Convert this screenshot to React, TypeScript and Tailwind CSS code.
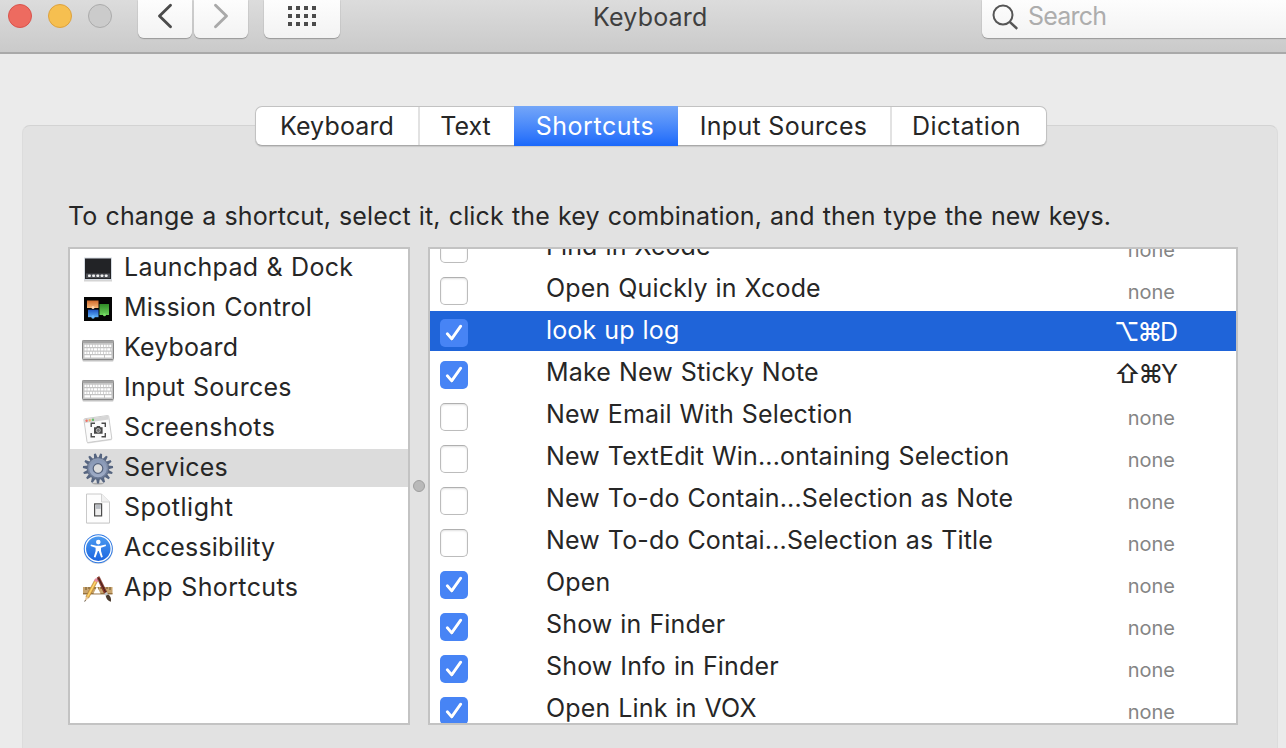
import React from "react";

function LaunchpadIcon() {
  return (
    <svg width="32" height="32" viewBox="0 0 32 32">
      <rect x="2" y="6" width="28" height="22.5" fill="#b9b9b9" opacity=".6" />
      <rect x="2" y="4.500" width="28" height="22.500" fill="#d5dbe2" />
      <rect x="3" y="5.500" width="26" height="20.500" fill="#222326" />
      <rect x="4" y="20.500" width="24" height="4.600" fill="#4c4f55" />
      {[6, 10.2, 14.4, 18.6, 22.8].map((x) => (
        <rect key={x} x={x} y="21.500" width="2.800" height="2.600" rx=".8" fill="#f0f0f0" />
      ))}
    </svg>
  );
}

function MissionIcon() {
  return (
    <svg width="32" height="32" viewBox="0 0 32 32">
      <defs>
        <linearGradient id="mo" x1="0" y1="0" x2="0" y2="1"><stop offset="0" stopColor="#d06a2c" /><stop offset="1" stopColor="#f9b878" /></linearGradient>
        <linearGradient id="mb" x1="0" y1="0" x2="0" y2="1"><stop offset="0" stopColor="#1f55c4" /><stop offset="1" stopColor="#5fb1f7" /></linearGradient>
        <linearGradient id="mg" x1="0" y1="0" x2="0" y2="1"><stop offset="0" stopColor="#2f8a26" /><stop offset="1" stopColor="#6bd05a" /></linearGradient>
      </defs>
      <rect x="2" y="4" width="28" height="24" fill="#050505" />
      <rect x="5" y="7.500" width="11.500" height="7.500" fill="url(#mo)" />
      <rect x="6" y="16.700" width="10.500" height="7.500" fill="url(#mb)" />
      <rect x="17.500" y="11" width="9.500" height="11" fill="url(#mg)" />
      <circle cx="11" cy="14.600" r="1.500" fill="#ffd5ac" />
      <circle cx="11" cy="24" r="1.700" fill="#69b8ff" />
      <circle cx="22.500" cy="21.800" r="1.500" fill="#78dd66" />
    </svg>
  );
}

function KeyboardIcon() {
  return (
    <svg width="32" height="32" viewBox="0 0 32 32">
      <rect x="0.500" y="26" width="31" height="2.500" rx="1" fill="#9b9b9b" opacity=".6" />
      <rect x="0.500" y="7.500" width="31" height="19" rx=".8" fill="#c4c4c4" stroke="#858585" />
      <rect x="0.500" y="7.500" width="31" height="2.500" fill="#a5a5a5" />
      <path d="M2.500 12.800H29.500M2.500 19.800H29.500" stroke="#fff" strokeWidth="2.300" strokeDasharray="2 .75" />
      <path d="M2.500 16.300H29.500" stroke="#fff" strokeWidth="2.300" strokeDasharray="2.200 .7 3 .7" />
      <path d="M2.500 23.300H8M9 23.300H22M23 23.300H29.500" stroke="#fff" strokeWidth="2.300" />
    </svg>
  );
}

function ScreenshotIcon() {
  return (
    <svg width="32" height="32" viewBox="0 0 32 32">
      <g transform="rotate(-8 16 17)">
        <rect x="3.500" y="5" width="25" height="24" rx="1" fill="#bcbcbc" opacity=".5" />
        <rect x="3.500" y="4" width="25" height="24" rx="1" fill="#fbfbfb" stroke="#c4c4c4" strokeWidth=".8" />
        <rect x="4" y="4.400" width="24" height="3.800" fill="#d6d6d6" />
        <circle cx="6" cy="6.200" r="1.200" fill="#f27066" /><circle cx="9.200" cy="6.200" r="1.200" fill="#edb86e" /><circle cx="12.400" cy="6.200" r="1.200" fill="#67bd68" />
      </g>
      <path d="M9.200 14v-3.800h3.800M19.500 10.200h3.800V14M23.300 20v3.800h-3.800M13 23.800H9.200V20" fill="none" stroke="#4a4a4a" strokeWidth="1.400" />
      <path d="M12 14.300h2.200l.8-1.200h2.800l.8 1.200h2v6.400H12z" fill="#474747" />
      <circle cx="16.300" cy="17.400" r="2" fill="#777" stroke="#ddd" strokeWidth=".7" />
    </svg>
  );
}

function GearIcon() {
  const teeth = Array.from({ length: 15 }, (_, i) => i * 24);
  return (
    <svg width="32" height="32" viewBox="0 0 32 32">
      <defs>
        <linearGradient id="gear" x1="0" y1="0" x2="0" y2="32" gradientUnits="userSpaceOnUse"><stop offset="0" stopColor="#98a7c0" /><stop offset="1" stopColor="#5c6a86" /></linearGradient>
        <linearGradient id="gearface" x1="0" y1="0" x2="0" y2="1"><stop offset="0" stopColor="#8797b5" /><stop offset="1" stopColor="#9facc6" /></linearGradient>
      </defs>
      <ellipse cx="16" cy="30.600" rx="6" ry=".9" fill="#aaa" />
      {teeth.map((a) => (
        <path key={a} d="M14 6 15 .4h2L18 6z" fill="#566580" transform={`rotate(${a + 12} 16 15.500)`} />
      ))}
      <circle cx="16" cy="15.500" r="10.800" fill="url(#gear)" stroke="#596680" strokeWidth=".8" />
      <circle cx="16" cy="15.500" r="8.800" fill="url(#gearface)" />
      <circle cx="16" cy="15.500" r="4.800" fill="#dcdcdc" stroke="#56637d" strokeWidth="1.200" />
    </svg>
  );
}

function SpotlightIcon() {
  return (
    <svg width="32" height="32" viewBox="0 0 32 32">
      <path d="M4.500 1.500h15l8 8v20.500h-23z" fill="#ddd" transform="translate(0 .5)" />
      <path d="M4.500 1h15l8 8v21h-23z" fill="#fdfdfd" stroke="#c4c4c4" strokeWidth=".9" />
      <path d="M19.500 1v8h8" fill="#f0f0f0" stroke="#cfcfcf" strokeWidth=".9" />
      <rect x="12.600" y="10.900" width="7" height="12" fill="#eee" stroke="#4b4b4b" strokeWidth="1.200" />
      <rect x="13.600" y="11.900" width="5" height="4" fill="#b8bcc2" />
    </svg>
  );
}

function AccessibilityIcon() {
  return (
    <svg width="32" height="32" viewBox="0 0 32 32">
      <defs><linearGradient id="acc" x1="0" y1="0" x2="0" y2="1"><stop offset="0" stopColor="#4b9bf0" /><stop offset="1" stopColor="#1a64e0" /></linearGradient></defs>
      <circle cx="16.300" cy="16.500" r="14.600" fill="#bbb" opacity=".5" />
      <circle cx="16.300" cy="15.700" r="14.500" fill="#2c78e4" />
      <circle cx="16.300" cy="15.700" r="12.900" fill="url(#acc)" stroke="#fff" strokeWidth="1.300" />
      <circle cx="16.300" cy="9.100" r="2.300" fill="#fff" />
      <path d="M8.900 11.500 14.200 12.700h4.200l5.300-1.200.3 1.600-5 1.700v3.200l1.800 6-1.700.6-2.400-6.600h-.8l-2.400 6.600-1.700-.6 1.800-6v-3.200l-5-1.700z" fill="#fff" />
    </svg>
  );
}

function AppsIcon() {
  return (
    <svg width="32" height="32" viewBox="0 0 32 32">
      <rect x="1" y="14" width="29.500" height="7" fill="#c9a56f" />
      <path d="M1 20.800h29.500" stroke="#896433" strokeWidth="1.200" />
      <path d="M4 14v3M7 14v2M10 14v3M13 14v2M16 14v3M19 14v2M22 14v3M25 14v2M28 14v3" stroke="#604720" strokeWidth=".9" />
      <path d="M18.500 20.500h-7l3.500-7z" fill="#fff" />
      <path d="M12.800 6.800 15.500 8.400 6.700 25 3.900 23.500z" fill="#f0b94d" stroke="#9a6d2b" strokeWidth=".5" />
      <path d="M13.700 8.500 5.600 23.500" stroke="#ffdb7d" strokeWidth="1" />
      <path d="M12 7.800 13.300 5.600q1.500-1.100 3 1.300L15 9.300z" fill="#e78ba2" />
      <path d="M3.900 23.500 6.700 25 2.400 29z" fill="#e7c699" />
      <path d="m2.900 27.200-.5 1.800 1.600-1.500z" fill="#222" />
      <path d="M15 4.800 17.200 3.500 24.800 19l-2.500 1.400z" fill="#a33322" stroke="#57241c" strokeWidth=".5" />
      <path d="m16.500 5 7.200 14.500" stroke="#2c2525" strokeWidth="1" />
      <path d="m22.300 20.300 2.500-1.400 1.400 2.600-2.500 1.300z" fill="#bfc4c8" />
      <path d="M23.700 22.800 26.200 21.500q3.500 2.300 2.700 7.200-4.200-.8-5.200-5.900z" fill="#4b3c30" />
    </svg>
  );
}

const categories = [
  { name: "Launchpad & Dock", icon: LaunchpadIcon, tracking: "tracking-[0.3px]" },
  { name: "Mission Control", icon: MissionIcon, tracking: "tracking-[0.2px]" },
  { name: "Keyboard", icon: KeyboardIcon, tracking: "tracking-[0.15px]" },
  { name: "Input Sources", icon: KeyboardIcon, tracking: "tracking-[0.25px]" },
  { name: "Screenshots", icon: ScreenshotIcon, tracking: "tracking-[0.35px]" },
  { name: "Services", icon: GearIcon, selected: true, tracking: "tracking-[0.15px]" },
  { name: "Spotlight", icon: SpotlightIcon, tracking: "tracking-[0.5px]" },
  { name: "Accessibility", icon: AccessibilityIcon, tracking: "tracking-[0.17px]" },
  { name: "App Shortcuts", icon: AppsIcon, tracking: "tracking-[0.38px]" },
];

const services = [
  { name: "Find in Xcode", on: false },
  { name: "Open Quickly in Xcode", on: false },
  { name: "look up log", on: true, symbols: "⌥⌘", letter: "D", selected: true },
  { name: "Make New Sticky Note", on: true, symbols: "⇧⌘", letter: "Y" },
  { name: "New Email With Selection", on: false },
  { name: "New TextEdit Win...ontaining Selection", on: false },
  { name: "New To-do Contain...Selection as Note", on: false },
  { name: "New To-do Contai...Selection as Title", on: false },
  { name: "Open", on: true },
  { name: "Show in Finder", on: true },
  { name: "Show Info in Finder", on: true },
  { name: "Open Link in VOX", on: true },
];

const tabs = [
  { name: "Keyboard", cls: "w-[164px] border-r-2 border-[#e2e2e2] tracking-[0.15px]" },
  { name: "Text", cls: "w-[94px] pr-[3px]" },
  { name: "Shortcuts", cls: "w-[164px] -my-px bg-linear-to-b from-[#74a6f8] to-[#1a68fa] pr-[2px] text-white tracking-[0.55px]" },
  { name: "Input Sources", cls: "w-[214px] border-r-2 border-[#e2e2e2] pr-px tracking-[0.3px]" },
  { name: "Dictation", cls: "flex-1 pr-[5px] tracking-[0.5px]" },
];

function Checkbox({ on }: { on: boolean }) {
  if (!on) {
    return <span className="block size-7 rounded-[5px] border border-[#bcbcbc] border-t-[#b0b0b0] bg-white shadow-[inset_0_1px_2px_rgba(0,0,0,0.12)]" />;
  }
  return (
    <span className="flex size-7 rounded-[5px] bg-[#4784f5]">
      <svg width="28" height="28" viewBox="0 0 28 28" fill="none" strokeLinecap="round" strokeLinejoin="round">
        <path d="M7.300 15.600 11.700 20.700 20.700 8" stroke="#2b62c8" strokeWidth="2.600" opacity=".45" />
        <path d="M7.300 14.800 11.700 19.900 20.700 7.200" stroke="#fff" strokeWidth="2.900" />
      </svg>
    </span>
  );
}

export default function App() {
  return (
    <div className="flex h-[748px] w-[1286px] flex-col overflow-hidden bg-[#ebebeb] font-['Inter',sans-serif] text-[25px] text-[#262626]">
      <header className="flex h-[54px] shrink-0 items-start border-b-2 border-[#a9a9a9] bg-linear-to-b from-[#dcdcdc] to-[#cacaca]">
        <div className="flex gap-4 pl-2 pt-1">
          <span className="size-6 rounded-full border border-[#d9534c] bg-[#ed6b60]" />
          <span className="size-6 rounded-full border border-[#dda23e] bg-[#f6bf50]" />
          <span className="size-6 rounded-full border border-[#ababab] bg-[#cbcbcb]" />
        </div>
        <div className="ml-[26px] flex h-[38px] gap-[2px]">
          <div className="w-[54px] rounded-b-md bg-linear-to-b from-[#fdfdfd] to-[#f3f3f3] shadow-[0_1px_1px_#999,0_0_1px_#999]">
            <svg width="54" height="38" viewBox="0 0 54 38"><path d="M32.500 5.300 21.500 16l11 10.700" fill="none" stroke="#4b4b4b" strokeWidth="2.900" strokeLinecap="round" strokeLinejoin="round" /></svg>
          </div>
          <div className="w-[54px] rounded-b-md bg-linear-to-b from-[#fdfdfd] to-[#f3f3f3] shadow-[0_1px_1px_#999,0_0_1px_#999]">
            <svg width="54" height="38" viewBox="0 0 54 38"><path d="M21.500 5.300 32.500 16l-11 10.700" fill="none" stroke="#a9a9a9" strokeWidth="2.900" strokeLinecap="round" strokeLinejoin="round" /></svg>
          </div>
        </div>
        <div className="ml-4 flex h-[38px] w-[76px] justify-center rounded-b-md bg-linear-to-b from-[#fdfdfd] to-[#f3f3f3] pt-[6px] shadow-[0_1px_1px_#999,0_0_1px_#999]">
          <div className="grid h-5 grid-cols-4 gap-1">
            {Array.from({ length: 12 }, (_, i) => <span key={i} className="size-1 bg-[#4b4b4b]" />)}
          </div>
        </div>
        <h1 className="ml-[253px] w-[389px] pt-[1px] leading-8 tracking-[0.2px] text-[#3f3f3f]">Keyboard</h1>
        <div className="flex h-[38px] flex-1 rounded-bl-md bg-linear-to-b from-[#fdfdfd] to-[#f3f3f3] pl-[10px] shadow-[0_1px_1px_#999,0_0_1px_#999]">
          <svg width="28" height="34" viewBox="0 0 28 34" fill="none" stroke="#555" strokeWidth="2"><circle cx="11" cy="15" r="9.500" /><path d="m17.700 21.800 7.500 7" strokeWidth="2.500" /></svg>
          <span className="ml-2 leading-8 tracking-[-0.8px] text-[#adadad]">Search</span>
        </div>
      </header>

      <main className="ml-[22px] mr-2 mt-[71px] flex flex-1 flex-col rounded-t-[8px] border border-b-0 border-[#d3d3d3] border-x-[#dcdcdc] bg-[#e2e2e2]">
        <nav className="-mt-[20px] ml-[232px] flex h-[40px] w-[792px] shrink-0 rounded-[7px] border border-[#c2c2c2] border-b-[#a9a9a9] bg-white shadow-[0_1px_1px_rgba(0,0,0,0.12)]">
          {tabs.map((t) => (
            <div key={t.name} className={`flex items-center justify-center whitespace-nowrap pt-[2px] ${t.cls}`}>{t.name}</div>
          ))}
        </nav>

        <p className="ml-[45px] mt-[54px] whitespace-nowrap leading-8 tracking-[0.16px] [word-spacing:0.8px]">To change a shortcut, select it, click the key combination, and then type the new keys.</p>

        <div className="ml-[45px] mt-[15px] flex h-[478px] items-center">
          <ul className="h-full w-[342px] border-2 border-[#c3c3c3] bg-white">
            {categories.map(({ name, icon: Icon, selected, tracking }) => (
              <li key={name} className={`mb-[2px] flex h-[38px] pl-3 ${selected ? "bg-[#dcdcdc]" : ""}`}>
                <span className="pt-1"><Icon /></span>
                <span className={`ml-[10px] leading-9 [word-spacing:0.8px] ${tracking}`}>{name}</span>
              </li>
            ))}
          </ul>
          <span className="mx-[3px] size-3 rounded-full border border-[#9e9e9e] bg-[#b9b9b9]" />
          <div className="h-full w-[810px] overflow-hidden border-2 border-[#c3c3c3] bg-white">
            <ul className="-mt-[22px]">
              {services.map((s) => (
                <li key={s.name} className={`mb-[2px] flex h-10 pl-[10px] pr-[59px] ${s.selected ? "bg-[#1f64d9] text-white" : ""}`}>
                  <span className="pt-2"><Checkbox on={s.on} /></span>
                  <span className="ml-[78px] flex-1 whitespace-nowrap leading-[38px] tracking-[0.16px] [word-spacing:0.7px]">{s.name}</span>
                  {s.symbols ? (
                    <span className="-mr-px leading-[42px]"><span className="font-medium tracking-[-2.2px]">{s.symbols}</span>{s.letter}</span>
                  ) : (
                    <span className="pr-[2px] text-[20px] leading-[46px] text-[#858585]">none</span>
                  )}
                </li>
              ))}
            </ul>
          </div>
        </div>
      </main>
    </div>
  );
}
